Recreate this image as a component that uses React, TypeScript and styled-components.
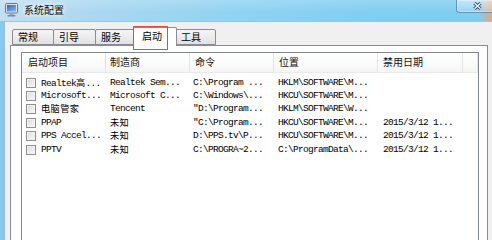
import { createGlobalStyle, styled } from "styled-components";

const GlobalStyle = createGlobalStyle`
  html, body {
    margin: 0;
    padding: 0;
    background: #f0f0f0;
  }
  body {
    font-family: "Noto Sans CJK SC", "Noto Sans", sans-serif;
    color: #000;
  }
`;

const Window = styled.div`
  width: 492px;
  height: 240px;
  overflow: hidden;
  display: flex;
  flex-direction: column;
`;

const TitleBar = styled.div`
  height: 22px;
  flex-shrink: 0;
  display: flex;
  align-items: flex-start;
  background:
    linear-gradient(180deg, rgba(255, 255, 255, 0.18), rgba(255, 255, 255, 0) 60%),
    linear-gradient(90deg, #c3dff1 0%, #abd8f1 18%, #92d3f2 45%, #80cef2 75%, #7fcdf1 97.4%, #f2a477 100%);
  border-bottom: 1px solid #9fc3da;
  box-sizing: border-box;
`;

const AppIcon = styled.svg`
  margin: 3px 0 0 5px;
  flex-shrink: 0;
`;

const Title = styled.span`
  margin-left: 6px;
  font-size: 10px;
  line-height: 20px;
  color: #101010;
  text-shadow: 0 0 4px #fff, 0 0 6px rgba(255, 255, 255, 0.9);
`;

const CloseButton = styled.div`
  margin-left: auto;
  margin-right: -6px;
  width: 42px;
  height: 13px;
  box-sizing: border-box;
  border: 1px solid rgba(45, 85, 120, 0.55);
  border-top: none;
  border-radius: 0 0 4px 4px;
  background: linear-gradient(180deg, rgba(255, 255, 255, 0.45), rgba(255, 255, 255, 0.15));
  box-shadow: inset 0 0 0 1px rgba(255, 255, 255, 0.35);
  display: flex;
  align-items: center;
  justify-content: center;
`;

const Body = styled.div`
  flex: 1;
  display: flex;
  flex-direction: column;
  border-left: 4px solid #88caec;
  box-shadow: inset 1px 0 0 #a9b8c6;
  background: #f0f0f0;
  padding: 5px 4px 0 6px;
  min-height: 0;
`;

const TabStrip = styled.div`
  position: relative;
  height: 18px;
  display: flex;
  align-items: flex-end;
  padding-left: 2px;
  flex-shrink: 0;
`;

const Tab = styled.div<{ $w: number; $active?: boolean }>`
  width: ${(p) => p.$w}px;
  box-sizing: border-box;
  height: ${(p) => (p.$active ? 19 : 16)}px;
  margin: ${(p) => (p.$active ? "0 -2px -1px -2px" : "0 -1px 0 0")};
  padding-left: ${(p) => (p.$active ? 8 : 5)}px;
  border: 1px solid #898c95;
  border-bottom: ${(p) => (p.$active ? "none" : "1px solid #898c95")};
  border-radius: 2px 2px 0 0;
  background: ${(p) =>
    p.$active ? "#fff" : "linear-gradient(180deg, #f4f4f4 0%, #ececec 50%, #e1e1e1 100%)"};
  font-size: 10px;
  line-height: ${(p) => (p.$active ? 16 : 14)}px;
  position: relative;
  z-index: ${(p) => (p.$active ? 1 : 0)};
`;

const Highlight = styled.div`
  position: absolute;
  left: 123px;
  top: -1px;
  width: 35px;
  height: 24px;
  box-sizing: border-box;
  border: 1.5px solid #e24a44;
  z-index: 3;
  pointer-events: none;
`;

const Panel = styled.div`
  flex: 1;
  display: flex;
  flex-direction: column;
  border: 1px solid #898c95;
  border-bottom: none;
  background: #fff;
  padding: 6px 8px 0 10px;
  min-height: 0;
`;

const ListView = styled.div`
  flex: 1;
  border: 1px solid #828790;
  border-bottom: none;
  background: #fff;
  display: flex;
  flex-direction: column;
`;

const HeaderRow = styled.div`
  display: flex;
  height: 19px;
  border-bottom: 1px solid #eaeaea;
  background: linear-gradient(180deg, #ffffff 0%, #fbfbfb 60%, #f4f5f7 100%);
`;

const HeaderCell = styled.div<{ $w?: number; $pad?: number }>`
  box-sizing: border-box;
  ${(p) => (p.$w ? `width: ${p.$w}px;` : "flex: 1;")}
  padding-left: ${(p) => p.$pad ?? 5}px;
  border-right: 1px solid #e3e5e8;
  font-size: 10px;
  line-height: 18px;
  white-space: nowrap;
  color: #111;
`;

const Rows = styled.div`
  padding-top: 3px;
`;

const Row = styled.div`
  display: flex;
  height: 13.4px;
  align-items: center;
`;

const Cell = styled.div<{ $w: number; $pad?: number }>`
  box-sizing: border-box;
  width: ${(p) => p.$w}px;
  padding-left: ${(p) => p.$pad ?? 4}px;
  display: flex;
  align-items: center;
  gap: 5px;
  font-family: "Liberation Mono", "Noto Sans CJK SC", monospace;
  font-size: 9.5px;
  letter-spacing: -0.7px;
  line-height: 12px;
  white-space: nowrap;
  color: #000;
`;

const Han = styled.span`
  font-family: "Noto Sans CJK SC", sans-serif;
  font-size: 9.2px;
  line-height: 12px;
  letter-spacing: 0.4px;
`;

const Check = styled.span`
  width: 10px;
  height: 10px;
  flex-shrink: 0;
  box-sizing: border-box;
  border: 1px solid #8f8f8f;
  background: linear-gradient(135deg, #d6d6d6 0%, #ececec 55%, #fafafa 100%);
  box-shadow: inset 0 0 0 1px #f3f3f3;
`;

const columns = [
  { title: "启动项目", w: 84, pad: 6 },
  { title: "制造商", w: 84, pad: 4 },
  { title: "命令", w: 84, pad: 5 },
  { title: "位置", w: 104, pad: 5 },
  { title: "禁用日期", w: 85, pad: 5 },
];

const cellPads = [4, 4, 3, 4, 5];

const rows = [
  ["Realtek高...", "Realtek Sem...", "C:\\Program ...", "HKLM\\SOFTWARE\\M...", ""],
  ["Microsoft...", "Microsoft C...", "C:\\Windows\\...", "HKCU\\SOFTWARE\\M...", ""],
  ["电脑管家", "Tencent", "\"D:\\Program...", "HKLM\\SOFTWARE\\W...", ""],
  ["PPAP", "未知", "\"C:\\Program...", "HKCU\\SOFTWARE\\M...", "2015/3/12 1..."],
  ["PPS Accel...", "未知", "D:\\PPS.tv\\P...", "HKCU\\SOFTWARE\\M...", "2015/3/12 1..."],
  ["PPTV", "未知", "C:\\PROGRA~2...", "C:\\ProgramData\\...", "2015/3/12 1..."],
];

const tabs = [
  { label: "常规", w: 42 },
  { label: "引导", w: 43 },
  { label: "服务", w: 41 },
  { label: "启动", w: 44, active: true },
  { label: "工具", w: 41 },
];

// wide characters get their own span so the half-width letter spacing does not squeeze them
function mixed(text: string) {
  const parts = text.match(/[\u4e00-\u9fff]+|[^\u4e00-\u9fff]+/g) || [];
  return parts.map((part, i) =>
    /[\u4e00-\u9fff]/.test(part) ? <Han key={i}>{part}</Han> : <span key={i}>{part}</span>
  );
}

export default function App() {
  return (
    <>
      <GlobalStyle />
      <Window>
        <TitleBar>
          <AppIcon width="13" height="14" viewBox="0 0 13 14">
            <defs>
              <linearGradient id="scr" x1="0" y1="0" x2="1" y2="1">
                <stop offset="0" stopColor="#2a63c4" />
                <stop offset="1" stopColor="#86c0f2" />
              </linearGradient>
            </defs>
            <rect x="0.5" y="0.5" width="12" height="9.5" rx="1" fill="#dfe4ea" stroke="#6b7886" />
            <rect x="2" y="2" width="9" height="6.5" fill="url(#scr)" />
            <path d="M5 10.5 h3 l0.8 1.6 h-4.6 z" fill="#9aa5b1" />
            <rect x="2.5" y="12" width="8" height="1.5" rx="0.5" fill="#7d8995" />
          </AppIcon>
          <Title>系统配置</Title>
          <CloseButton>
            <svg width="11" height="8" viewBox="0 0 11 8">
              <path d="M2.5 1.2 L8.5 6.8 M8.5 1.2 L2.5 6.8" stroke="#2e3f52" strokeWidth="3.2" />
              <path d="M2.5 1.2 L8.5 6.8 M8.5 1.2 L2.5 6.8" stroke="#f4f7fa" strokeWidth="1.5" />
            </svg>
          </CloseButton>
        </TitleBar>
        <Body>
          <TabStrip>
            {tabs.map((t) => (
              <Tab key={t.label} $w={t.w} $active={t.active}>
                {t.label}
              </Tab>
            ))}
            <Highlight />
          </TabStrip>
          <Panel>
            <ListView>
              <HeaderRow>
                {columns.map((c) => (
                  <HeaderCell key={c.title} $w={c.w} $pad={c.pad}>
                    {c.title}
                  </HeaderCell>
                ))}
                <HeaderCell />
              </HeaderRow>
              <Rows>
                {rows.map((r, ri) => (
                  <Row key={ri}>
                    {r.map((text, ci) => (
                      <Cell key={ci} $w={columns[ci].w} $pad={cellPads[ci]}>
                        {ci === 0 && <Check />}
                        <span>{mixed(text)}</span>
                      </Cell>
                    ))}
                  </Row>
                ))}
              </Rows>
            </ListView>
          </Panel>
        </Body>
      </Window>
    </>
  );
}
